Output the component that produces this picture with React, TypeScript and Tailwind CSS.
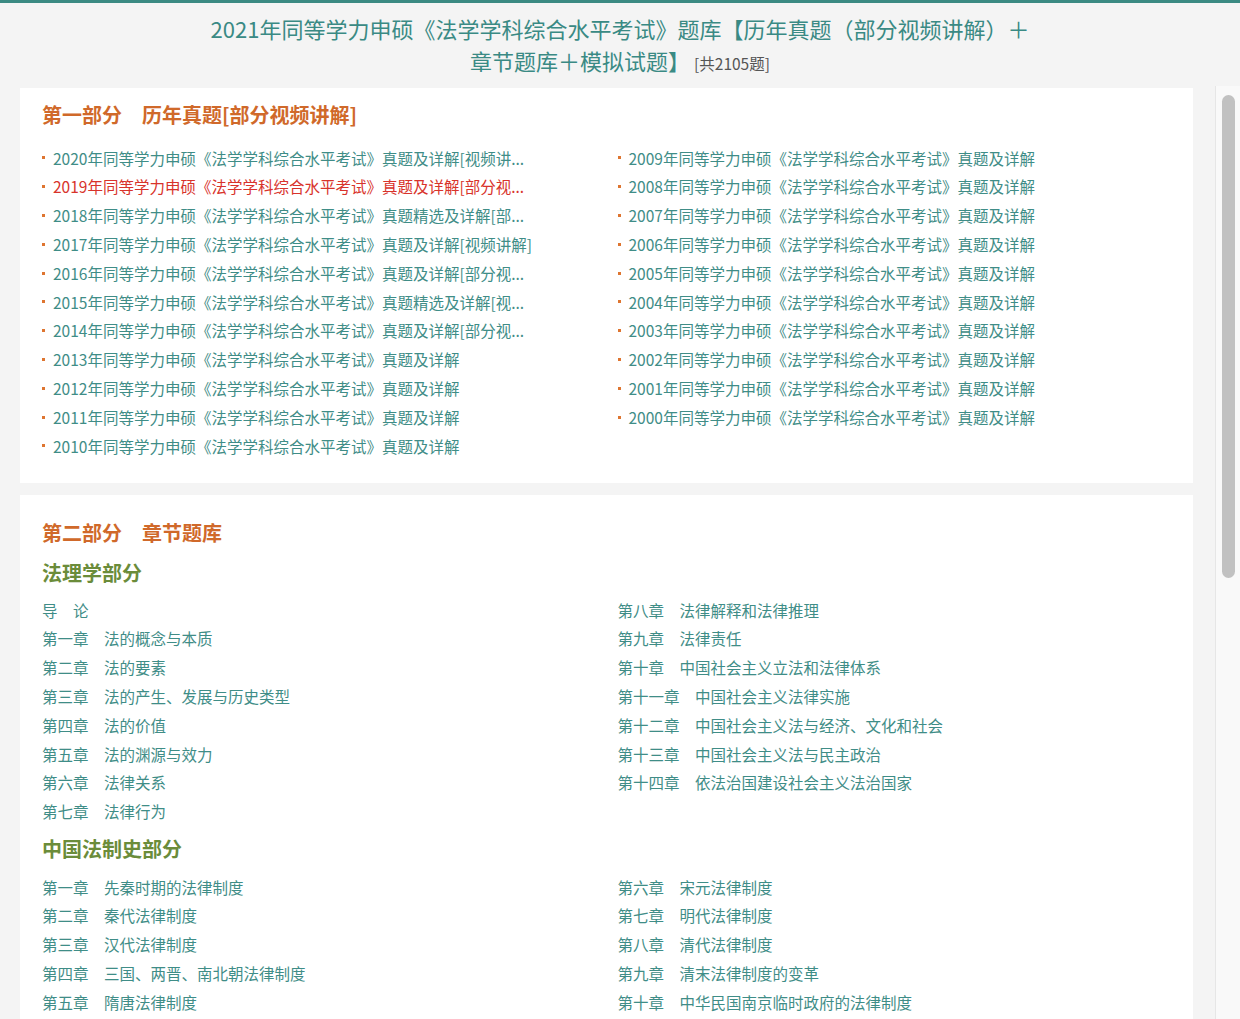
import React from "react";

const leftYears: { t: string; red?: boolean }[] = [
  { t: "2020年同等学力申硕《法学学科综合水平考试》真题及详解[视频讲..." },
  { t: "2019年同等学力申硕《法学学科综合水平考试》真题及详解[部分视...", red: true },
  { t: "2018年同等学力申硕《法学学科综合水平考试》真题精选及详解[部..." },
  { t: "2017年同等学力申硕《法学学科综合水平考试》真题及详解[视频讲解]" },
  { t: "2016年同等学力申硕《法学学科综合水平考试》真题及详解[部分视..." },
  { t: "2015年同等学力申硕《法学学科综合水平考试》真题精选及详解[视..." },
  { t: "2014年同等学力申硕《法学学科综合水平考试》真题及详解[部分视..." },
  { t: "2013年同等学力申硕《法学学科综合水平考试》真题及详解" },
  { t: "2012年同等学力申硕《法学学科综合水平考试》真题及详解" },
  { t: "2011年同等学力申硕《法学学科综合水平考试》真题及详解" },
  { t: "2010年同等学力申硕《法学学科综合水平考试》真题及详解" },
];

const rightYears: string[] = [
  "2009", "2008", "2007", "2006", "2005", "2004", "2003", "2002", "2001", "2000",
].map((y) => `${y}年同等学力申硕《法学学科综合水平考试》真题及详解`);

const jurisLeft = [
  ["导　论", ""],
  ["第一章", "法的概念与本质"],
  ["第二章", "法的要素"],
  ["第三章", "法的产生、发展与历史类型"],
  ["第四章", "法的价值"],
  ["第五章", "法的渊源与效力"],
  ["第六章", "法律关系"],
  ["第七章", "法律行为"],
];
const jurisRight = [
  ["第八章", "法律解释和法律推理"],
  ["第九章", "法律责任"],
  ["第十章", "中国社会主义立法和法律体系"],
  ["第十一章", "中国社会主义法律实施"],
  ["第十二章", "中国社会主义法与经济、文化和社会"],
  ["第十三章", "中国社会主义法与民主政治"],
  ["第十四章", "依法治国建设社会主义法治国家"],
];
const histLeft = [
  ["第一章", "先秦时期的法律制度"],
  ["第二章", "秦代法律制度"],
  ["第三章", "汉代法律制度"],
  ["第四章", "三国、两晋、南北朝法律制度"],
  ["第五章", "隋唐法律制度"],
];
const histRight = [
  ["第六章", "宋元法律制度"],
  ["第七章", "明代法律制度"],
  ["第八章", "清代法律制度"],
  ["第九章", "清末法律制度的变革"],
  ["第十章", "中华民国南京临时政府的法律制度"],
];

function YearItem({ t, red }: { t: string; red?: boolean }) {
  return (
    <div className="flex items-center h-[28.8px] leading-[28.8px]">
      <span className="w-[3px] h-[3px] bg-[#de7530] mr-[8px] shrink-0" />
      <span className={red ? "text-[#d8332b] whitespace-nowrap" : "text-[#3f8d87] whitespace-nowrap"}>{t}</span>
    </div>
  );
}

function Chapter({ a, b }: { a: string; b: string }) {
  return (
    <div className="h-[28.8px] leading-[28.8px] text-[#3f8d87] whitespace-nowrap">
      {a}
      {b ? <span className="ml-[15.5px]">{b}</span> : null}
    </div>
  );
}

function ChapterGrid({ left, right }: { left: string[][]; right: string[][] }) {
  return (
    <div className="grid grid-cols-2">
      <div className="flex flex-col">
        {left.map(([a, b]) => (
          <Chapter key={a} a={a} b={b} />
        ))}
      </div>
      <div className="flex flex-col">
        {right.map(([a, b]) => (
          <Chapter key={a} a={a} b={b} />
        ))}
      </div>
    </div>
  );
}

export default function App() {
  return (
    <div
      className="h-[1019px] w-[1240px] bg-[#f4f4f4] border-t-[3px] border-[#3b8a82] flex flex-col overflow-hidden"
      style={{ fontFamily: '"Noto Sans CJK SC", "Noto Sans", sans-serif' }}
    >
      <header className="h-[83px] shrink-0 pt-[9px] text-center text-[22px] leading-[32px] text-[#3a8a84]">
        <div>2021年同等学力申硕《法学学科综合水平考试》题库【历年真题（部分视频讲解）＋</div>
        <div>
          章节题库＋模拟试题】
          <span className="ml-[4px] text-[15.5px] text-[#555555]">[共2105题]</span>
        </div>
      </header>
      <div className="flex-1 flex min-h-0">
        <div className="flex-1 pl-[20px] pr-[22px] overflow-hidden text-[15.5px]">
          <section className="mt-[2px] bg-white pl-[22px] pt-[13px] pb-[22.6px]">
            <h2 className="text-[20px] leading-[28px] font-bold text-[#d0692a]">
              第一部分<span className="ml-[20px]">历年真题[部分视频讲解]</span>
            </h2>
            <div className="grid grid-cols-2 mt-[14.6px]">
              <div className="flex flex-col">
                {leftYears.map((y) => (
                  <YearItem key={y.t} t={y.t} red={y.red} />
                ))}
              </div>
              <div className="flex flex-col">
                {rightYears.map((y) => (
                  <YearItem key={y} t={y} />
                ))}
              </div>
            </div>
          </section>
          <section className="mt-[12px] bg-white pl-[22px] pt-[24px] pb-[40px]">
            <h2 className="text-[20px] leading-[28px] font-bold text-[#d0692a]">
              第二部分<span className="ml-[20px]">章节题库</span>
            </h2>
            <h3 className="mt-[12px] text-[20px] leading-[28px] font-bold text-[#6b8c3a]">法理学部分</h3>
            <div className="mt-[8.6px]">
              <ChapterGrid left={jurisLeft} right={jurisRight} />
            </div>
            <h3 className="mt-[9px] text-[20px] leading-[28px] font-bold text-[#6b8c3a]">中国法制史部分</h3>
            <div className="mt-[9.6px]">
              <ChapterGrid left={histLeft} right={histRight} />
            </div>
          </section>
        </div>
        <div className="w-[25px] shrink-0 border-l border-[#e6e6e6] bg-[#f9f9f9]">
          <div className="mt-[9px] ml-[6px] w-[13px] h-[483px] rounded-full bg-[#c1c1c1]" />
        </div>
      </div>
    </div>
  );
}
